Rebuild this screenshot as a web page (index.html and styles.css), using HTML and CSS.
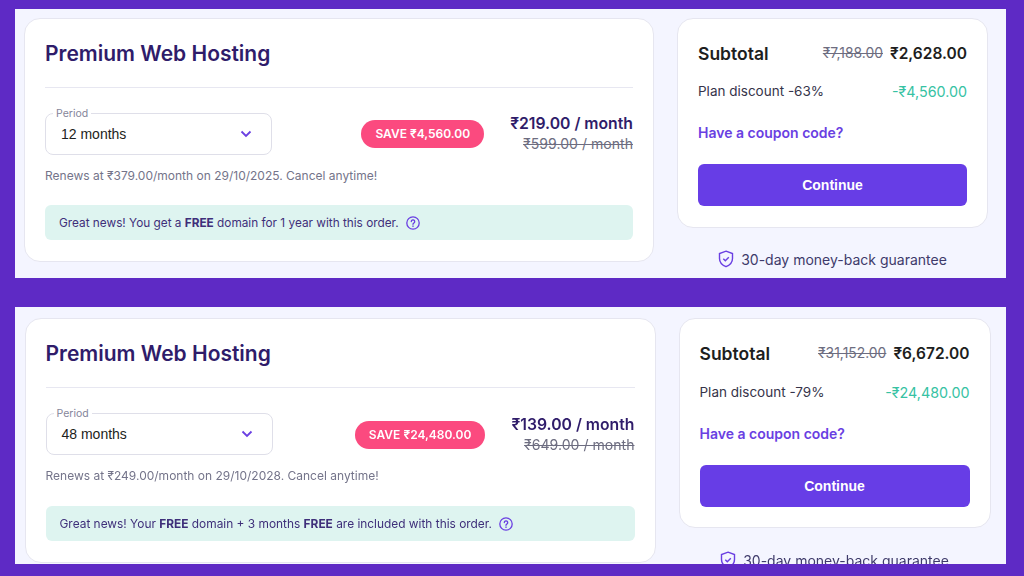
FILE: index.html
```html
<!DOCTYPE html>
<html lang="en">
<head>
<meta charset="utf-8">
<title>Premium Web Hosting</title>
<link rel="stylesheet" href="styles.css">
</head>
<body>
<section class="panel panel-a">
  <div class="card">
    <h2 class="title">Premium Web Hosting</h2>
    <hr class="rule">
    <div class="plan-row">
      <fieldset class="period"><legend>Period</legend><span class="period-value">12 months</span>
        <svg class="chev" viewBox="0 0 12 8"><path d="M1.500 1.500 6 6l4.500-4.500"/></svg></fieldset>
      <span class="save">SAVE ₹4,560.00</span>
      <div class="prices"><div class="price">₹219.00 / month</div><div class="old-price">₹599.00 / month</div></div>
    </div>
    <p class="renew">Renews at ₹379.00/month on 29/10/2025. Cancel anytime!</p>
    <div class="news"><span>Great news! You get a <b>FREE</b> domain for 1 year with this order.</span>
      <svg class="help" viewBox="0 0 14 14"><circle cx="7" cy="7" r="6.200"/><path d="M5.300 5.500a1.700 1.700 0 1 1 2.600 1.500c-.6.400-.9.700-.9 1.300"/><path d="M7 10v.4"/></svg></div>
  </div>
  <aside class="side">
    <div class="summary">
      <div class="row sub"><span>Subtotal</span><span class="totals"><s>₹7,188.00</s><b>₹2,628.00</b></span></div>
      <div class="row disc"><span>Plan discount -63%</span><span class="minus">-₹4,560.00</span></div>
      <a class="coupon">Have a coupon code?</a>
      <button class="continue">Continue</button>
    </div>
    <div class="guarantee">
      <svg class="shield" viewBox="0 0 16 18"><path d="M8 1.200 14.500 3.500v5c0 3.800-2.600 6.600-6.500 8.200-3.900-1.600-6.500-4.400-6.500-8.200v-5z"/><path d="m5.300 8.800 2 2 3.500-3.600"/></svg>
      <span>30-day money-back guarantee</span>
    </div>
  </aside>
</section>
<section class="panel panel-b">
  <div class="card">
    <h2 class="title">Premium Web Hosting</h2>
    <hr class="rule">
    <div class="plan-row">
      <fieldset class="period"><legend>Period</legend><span class="period-value">48 months</span>
        <svg class="chev" viewBox="0 0 12 8"><path d="M1.500 1.500 6 6l4.500-4.500"/></svg></fieldset>
      <span class="save">SAVE ₹24,480.00</span>
      <div class="prices"><div class="price">₹139.00 / month</div><div class="old-price">₹649.00 / month</div></div>
    </div>
    <p class="renew">Renews at ₹249.00/month on 29/10/2028. Cancel anytime!</p>
    <div class="news"><span>Great news! Your <b>FREE</b> domain + 3 months <b>FREE</b> are included with this order.</span>
      <svg class="help" viewBox="0 0 14 14"><circle cx="7" cy="7" r="6.200"/><path d="M5.300 5.500a1.700 1.700 0 1 1 2.600 1.500c-.6.400-.9.700-.9 1.300"/><path d="M7 10v.4"/></svg></div>
  </div>
  <aside class="side">
    <div class="summary">
      <div class="row sub"><span>Subtotal</span><span class="totals"><s>₹31,152.00</s><b>₹6,672.00</b></span></div>
      <div class="row disc"><span>Plan discount -79%</span><span class="minus">-₹24,480.00</span></div>
      <a class="coupon">Have a coupon code?</a>
      <button class="continue">Continue</button>
    </div>
    <div class="guarantee">
      <svg class="shield" viewBox="0 0 16 18"><path d="M8 1.200 14.500 3.500v5c0 3.800-2.600 6.600-6.500 8.200-3.900-1.600-6.500-4.400-6.500-8.200v-5z"/><path d="m5.300 8.800 2 2 3.500-3.600"/></svg>
      <span>30-day money-back guarantee</span>
    </div>
  </aside>
</section>
</body>
</html>
```
FILE: styles.css
```css
* { box-sizing: border-box; }
html, body { height: 100%; }
body {
  margin: 0;
  padding: 9px 18px 0 15px;
  background: #5e2ac5;
  font-family: "Inter", "Noto Sans", sans-serif;
  color: #2f1c6a;
  overflow: hidden;
  filter: blur(0.35px);
}
.panel {
  display: flex;
  background: #f4f5ff;
  padding: 9px 0 0 9px;
  overflow: hidden;
  align-items: flex-start;
  gap: 23px;
}
.panel-a { height: 269px; }
.panel-b { height: 257px; margin-top: 29px; padding-top: 11px; padding-left: 9.500px; }
.card {
  background: #fff;
  border: 1px solid #e6e6f0;
  border-radius: 16px;
  padding: 20px 20px 0;
  flex: none;
}
.panel-a .card { width: 630px; height: 244px; }
.panel-b .card { width: 631px; height: 245px; }
.title { margin: 0; font-size: 21px; line-height: 29px; font-weight: 600; color: #2f1c6a; }
.rule { border: 0; border-top: 1.500px solid #e7e7f1; margin: 19px 0 0; }
.plan-row { display: flex; align-items: center; margin-top: 19px; height: 48px; }
.period {
  width: 227px;
  height: 48px;
  margin: 0;
  padding: 0 19px 0 15px;
  border: 1px solid #dfdfe9;
  border-radius: 8px;
  display: flex;
  align-items: center;
  justify-content: space-between;
}
.period legend { font-size: 10.500px; line-height: 13px; color: #85859a; padding: 0 3px; margin-left: -8px; }
.period-value { font-family: "Liberation Sans", sans-serif; font-size: 14px; color: #1d1e20; margin-top: -7px; }
.chev { width: 12px; height: 8px; margin-top: -6px; fill: none; stroke: #6a3fe2; stroke-width: 1.800; }
.save {
  margin-left: auto;
  height: 28px;
  padding: 0 14px;
  border-radius: 14px;
  background: #fb4a7f;
  color: #fff;
  font-size: 12px;
  font-weight: 600;
  display: flex;
  align-items: center;
}
.prices { margin-left: 26px; text-align: right; }
.panel-a .save, .panel-a .prices { margin-top: 5px; }
.panel-b .save, .panel-b .prices { margin-top: 7px; }
.price { font-size: 15.750px; line-height: 21px; font-weight: 600; color: #2f1c6a; }
.old-price { font-size: 14.100px; line-height: 20px; font-weight: 400; color: #6d6d80; text-decoration: line-through; }
.renew { margin: 13px 0 0; font-size: 12px; line-height: 16px; color: #74748a; }
.news {
  height: 35px;
  border-radius: 6px;
  background: #def4f0;
  color: #3e2f7a;
  display: flex;
  align-items: center;
  gap: 7px;
  padding-left: 14px;
}
.panel-a .news { margin-top: 21px; font-size: 11.800px; }
.panel-b .news { margin-top: 22px; font-size: 11.900px; }
.help { width: 14px; height: 14px; fill: none; stroke: #6a3fe2; stroke-width: 1.300; stroke-linecap: round; }
.side { flex: none; }
.panel-a .side { width: 311px; }
.panel-b .side { width: 312px; }
.summary {
  background: #fff;
  border: 1px solid #e6e6f0;
  border-radius: 16px;
  height: 210px;
  padding: 0 20px;
}
.row { display: flex; justify-content: space-between; align-items: center; }
.sub { margin-top: 22px; height: 24px; font-size: 17.500px; font-weight: 600; color: #1d1e20; }
.totals { display: flex; gap: 7px; align-items: center; }
.totals s { font-size: 13.900px; font-weight: 400; color: #6d6d80; }
.totals b { font-size: 15.500px; font-weight: 600; }
.disc { margin-top: 16px; height: 20px; font-size: 13.500px; color: #36344a; }
.panel-b .disc { margin-top: 17px; }
.minus { color: #36c2a3; font-size: 14.300px; }
.coupon { display: block; margin-top: 21px; height: 22px; line-height: 22px; font-size: 14px; font-weight: 600; color: #6a3fe2; }
.continue {
  display: block;
  width: 100%;
  height: 42px;
  margin-top: 20px;
  border: 0;
  border-radius: 6px;
  background: #673de6;
  color: #fff;
  font-family: "Liberation Sans", sans-serif;
  font-size: 14px;
  font-weight: 700;
}
.guarantee {
  display: flex;
  align-items: center;
  justify-content: center;
  gap: 7px;
  height: 20px;
  font-size: 14px;
  color: #3e3a6a;
}
.panel-a .guarantee { margin-top: 21px; }
.panel-b .guarantee { margin-top: 22px; }
.shield { width: 16px; height: 18px; fill: none; stroke: #6a3fe2; stroke-width: 1.400; }
```
